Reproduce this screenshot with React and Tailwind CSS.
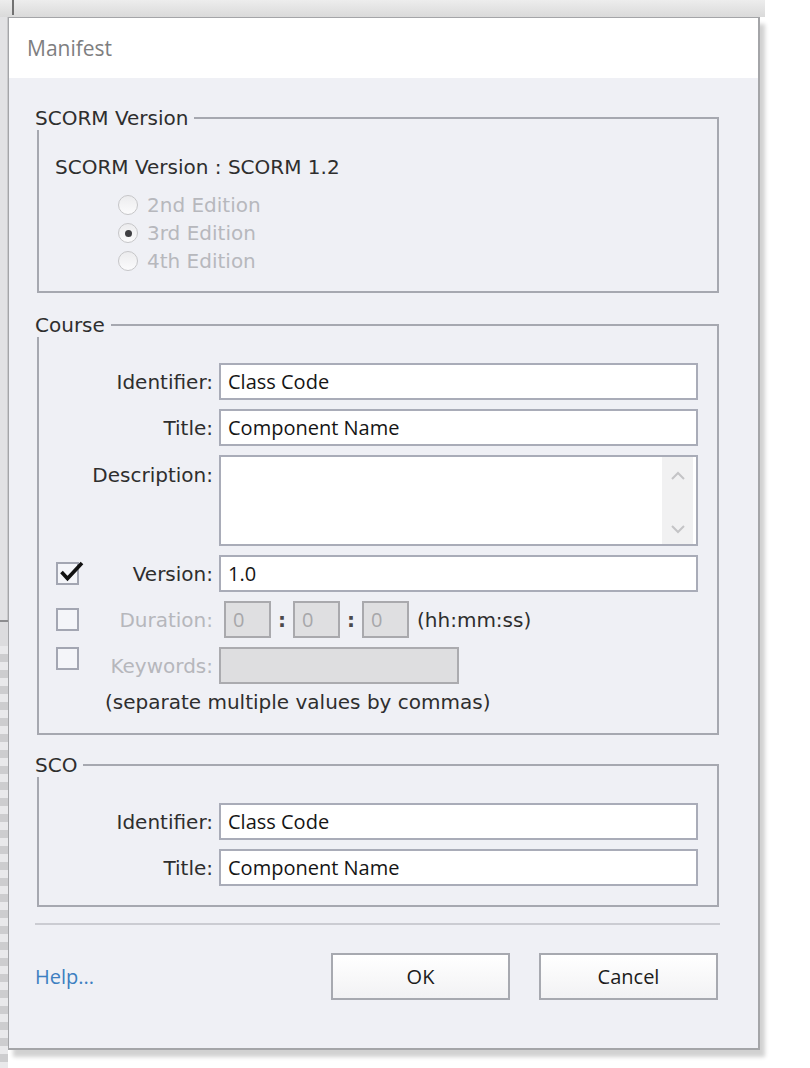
import React from "react";

const sans = "font-['DejaVu_Sans','Liberation_Sans',sans-serif]";
const ui = "font-['Open_Sans','Noto_Sans',sans-serif]";

function Group({ title, className, children }) {
  return (
    <fieldset className={`ml-[2px] w-[682px] border-2 border-[#a6a8b0] ${className}`}>
      <legend className="-ml-[4px] pr-[6px] text-[20px] leading-[24px] text-[#2e2e2e]">{title}</legend>
      {children}
    </fieldset>
  );
}

function CheckBox({ checked, className = "" }) {
  return (
    <span className={`relative block w-[23px] h-[23px] border-2 border-[#a3a6b2] bg-[#f4f5f9] ${className}`}>
      {checked ? (
        <svg className="absolute -top-[3px] left-[0px]" width="27" height="22" viewBox="0 0 27 22">
          <path d="M3.5 11 L9.5 17.5 L24 2" fill="none" stroke="#111" strokeWidth="3.6" />
        </svg>
      ) : null}
    </span>
  );
}

function Radio({ checked, label }) {
  return (
    <div className="flex items-center h-[28px]">
      <span className="w-[20px] h-[20px] rounded-full border border-[#c6c6c8] bg-gradient-to-b from-[#ececee] to-[#fbfbfc] flex items-center justify-center">
        {checked ? <span className="w-[7px] h-[7px] rounded-full bg-[#3f3f42]" /> : null}
      </span>
      <span className="ml-[9px] text-[#b7b8bd]">{label}</span>
    </div>
  );
}

function Field({ label, disabled, check, checkClass, height = "h-[37px]", children }) {
  return (
    <div className={`flex items-center pr-[19px] ${height}`}>
      <div className="w-[174px] h-full flex items-center">
        {check !== undefined ? <CheckBox checked={check} className={`ml-[17px] ${checkClass || ""}`} /> : null}
        <span className={`ml-auto ${disabled ? "text-[#b6b7bc]" : "text-[#2e2e2e]"}`}>{label}</span>
      </div>
      <div className="ml-[6px] flex-1 h-full flex items-center">{children}</div>
    </div>
  );
}

function TextBox({ value, className = "" }) {
  return (
    <div className={`h-[37px] border-2 border-[#a9acb8] bg-white flex items-center px-[7px] text-[20px] text-[#151515] ${ui} ${className}`}>
      {value}
    </div>
  );
}

function TimeBox() {
  return (
    <div className={`w-[47px] h-[37px] border-2 border-[#a9a9ad] bg-[#dfdfe1] flex items-center px-[7px] text-[20px] text-[#a7a7aa] ${ui}`}>
      0
    </div>
  );
}

function Chevron({ up }) {
  return (
    <svg width="16" height="10" viewBox="0 0 16 10">
      <path d={up ? "M2 8 L8 2 L14 8" : "M2 2 L8 8 L14 2"} fill="none" stroke="#c4c4c6" strokeWidth="2" />
    </svg>
  );
}

export default function App() {
  return (
    <div className={`w-[810px] h-[1068px] bg-white flex overflow-hidden text-[20px] leading-[24px] ${sans}`}>
      <div className="w-[765px] flex flex-col">
        <div className="h-[17px] flex bg-gradient-to-b from-[#ededed] to-[#dadada]">
          <div className="ml-[12px] w-[2px] h-[15px] bg-[#727272]" />
        </div>
        <div className="flex flex-1">
          <div className="w-[8px] flex flex-col">
            <div className="h-[603px] bg-[#e2e2e4] border-r border-[#c9c9cb]" />
            <div className="h-[2px] bg-[#8d8d8f]" />
            <div className="h-[24px] bg-[#dcdcde]" />
            <div className="flex-1 bg-[conic-gradient(#cdcdcf_25%,#e9e9eb_0_50%,#cdcdcf_0_75%,#e9e9eb_0)] bg-[length:16px_16px]" />
          </div>

          <div className="w-[752px] h-[1033px] bg-[#eff0f5] border-l border-t border-r-2 border-b-2 border-[#a4a5a8] shadow-[5px_7px_4px_rgba(0,0,0,0.18)] flex flex-col">
            <div className={`h-[60px] bg-white flex items-center pl-[18px] text-[21px] text-[#7e7e80] ${ui}`}>Manifest</div>

            <div className="flex-1 pt-[28px] pl-[26px] flex flex-col">
              <Group title="SCORM Version" className="pt-[25px] pb-[16px]">
                <div className="pl-[16px]">
                  <div className="text-[#2e2e2e]">SCORM Version : SCORM 1.2</div>
                  <div className="mt-[12px] ml-[63px]">
                    <Radio label="2nd Edition" />
                    <Radio label="3rd Edition" checked />
                    <Radio label="4th Edition" />
                  </div>
                </div>
              </Group>

              <Group title="Course" className="mt-[20px] pt-[26px] pb-[19px]">
                <div className="flex flex-col gap-[9px]">
                  <Field label="Identifier:">
                    <TextBox value="Class Code" className="flex-1" />
                  </Field>
                  <Field label="Title:">
                    <TextBox value="Component Name" className="flex-1" />
                  </Field>
                  <div className="flex pr-[19px] h-[91px]">
                    <div className="w-[174px] text-right text-[#2e2e2e] pt-[8px]">Description:</div>
                    <div className="ml-[6px] flex-1 border-2 border-[#a9acb8] bg-white flex justify-end">
                      <div className="w-[31px] mr-[3px] bg-[#f1f1f2] flex flex-col items-center justify-between pt-[14px] pb-[10px]">
                        <Chevron up />
                        <Chevron />
                      </div>
                    </div>
                  </div>
                  <Field label="Version:" check={true}>
                    <TextBox value="1.0" className="flex-1" />
                  </Field>
                  <Field label="Duration:" check={false} disabled>
                    <div className="ml-[5px] flex items-center">
                      <TimeBox />
                      <span className="w-[22px] text-center font-bold text-[#4a4a4c]">:</span>
                      <TimeBox />
                      <span className="w-[22px] text-center font-bold text-[#4a4a4c]">:</span>
                      <TimeBox />
                      <span className="ml-[8px] text-[#2e2e2e]">(hh:mm:ss)</span>
                    </div>
                  </Field>
                  <Field label="Keywords:" check={false} checkClass="self-start" disabled>
                    <div className="w-[240px] h-[37px] border-2 border-[#ababaf] bg-[#dedee0]" />
                  </Field>
                </div>
                <div className="mt-[6px] pl-[66px] text-[#2e2e2e]">(separate multiple values by commas)</div>
              </Group>

              <Group title="SCO" className="mt-[18px] pt-[26px] pb-[19px]">
                <div className="flex flex-col gap-[9px]">
                  <Field label="Identifier:">
                    <TextBox value="Class Code" className="flex-1" />
                  </Field>
                  <Field label="Title:">
                    <TextBox value="Component Name" className="flex-1" />
                  </Field>
                </div>
              </Group>

              <div className="mt-[16px] w-[685px] h-[2px] bg-[#cbccd2]" />

              <div className={`mt-[28px] w-[683px] h-[47px] flex items-center text-[20px] ${ui}`}>
                <span className="text-[#3d7fc1]">Help...</span>
                <button className="ml-auto w-[179px] h-[47px] border-2 border-[#a7a9b0] bg-gradient-to-b from-white to-[#f2f2f4] text-[#1c1c1c]">
                  OK
                </button>
                <button className="ml-[29px] w-[179px] h-[47px] border-2 border-[#a7a9b0] bg-gradient-to-b from-white to-[#f2f2f4] text-[#1c1c1c]">
                  Cancel
                </button>
              </div>
            </div>
          </div>
        </div>
      </div>
    </div>
  );
}
